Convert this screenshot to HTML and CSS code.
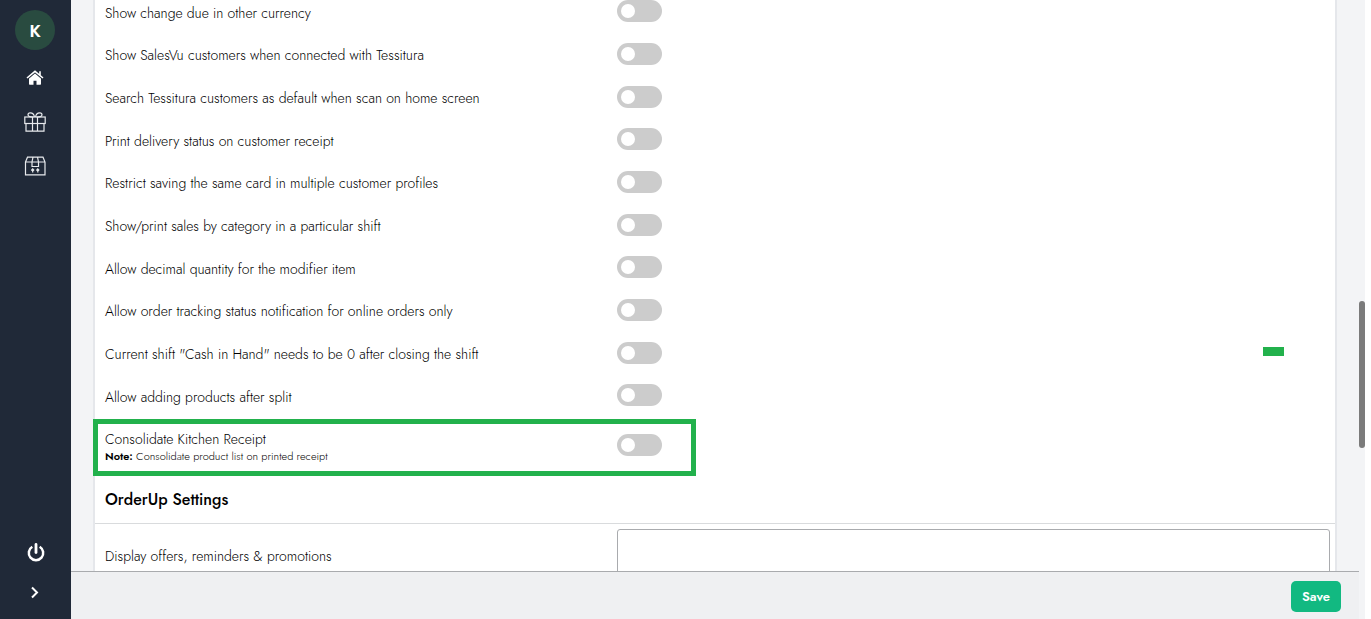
FILE: index.html
```html
<!DOCTYPE html>
<html lang="en">
<head>
<meta charset="utf-8">
<meta name="viewport" content="width=device-width, initial-scale=1">
<title>Settings</title>
<link rel="stylesheet" href="styles.css">
</head>
<body>
<div class="app">
  <nav class="sidebar" aria-label="Main">
    <div class="nav-group">
      <button class="avatar" type="button">K</button>
      <a class="nav-link" href="#" aria-label="Home">
        <svg width="18" height="18" viewBox="0 0 18 18" fill="#fff"><path d="M9 4.300 3 9.300V15c0 .4.3.7.7.7h3.800v-4h3v4h3.800c.4 0 .7-.3.7-.7V9.300z"/><path d="M1 9 9 2.300 17 9M14 6V2.300" fill="none" stroke="#fff" stroke-width="1.600"/><path d="M2.300 9.800 9 4.200l6.700 5.600" fill="none" stroke="#202938" stroke-width=".6"/></svg>
      </a>
      <a class="nav-link" href="#" aria-label="Gifts">
        <svg width="22" height="20" viewBox="0 0 22 20" fill="none" stroke="#e8eaed" stroke-width="1.200"><rect x=".8" y="5" width="20.400" height="6.500"/><path d="M2 11.500v7.700h18v-7.700M8.500 5v14.200M13.500 5v14.200M9.500 5C5.500 5 4 4 4 2.700 4 1.500 5 .8 6.200.8 8.500.8 10.200 2.500 10.400 5M12.500 5c4 0 5.500-1 5.500-2.300 0-1.200-1-1.900-2.200-1.900-2.300 0-4 1.700-4.200 4.200"/></svg>
      </a>
      <a class="nav-link" href="#" aria-label="Packages">
        <svg width="22" height="20" viewBox="0 0 22 20" fill="none" stroke="#e8eaed" stroke-width="1.200"><path d="M1.500 6 3.500 1.200h15.500L21 6v12.800H1.500zM1.500 6h6.500M14.500 6H21M9 1.200 8 6v4.500h6.500V6l-1-4.800M8 6h6.500"/><path d="M8.700 16.500v-3M13.800 16.500v-3M7.300 14.500l1.400-1.500 1.400 1.500M12.400 14.500l1.400-1.500 1.400 1.500"/></svg>
      </a>
    </div>
    <div class="nav-group nav-bottom">
      <button class="nav-link" type="button" aria-label="Log out">
        <svg width="20" height="20" viewBox="0 0 20 20" fill="none" stroke="#fff" stroke-width="2.500"><path d="M7.300 3.800a7.200 7.200 0 1 0 7.400 0"/><path d="M11 1.500v8" stroke-width="2.800" stroke-linecap="round"/></svg>
      </button>
      <button class="nav-link" type="button" aria-label="Expand menu">
        <svg width="12" height="14" viewBox="0 0 12 14" fill="none" stroke="#fff" stroke-width="2"><path d="m3 1.500 5 5-5 5"/></svg>
      </button>
    </div>
  </nav>

  <main class="main">
    <div class="viewport">
      <form class="card" id="settings">
        <div class="row"><label for="s1">Show change due in other currency</label><input class="toggle" type="checkbox" id="s1"></div>
        <div class="row"><label for="s2">Show SalesVu customers when connected with Tessitura</label><input class="toggle" type="checkbox" id="s2"></div>
        <div class="row"><label for="s3">Search Tessitura customers as default when scan on home screen</label><input class="toggle" type="checkbox" id="s3"></div>
        <div class="row"><label for="s4">Print delivery status on customer receipt</label><input class="toggle" type="checkbox" id="s4"></div>
        <div class="row"><label for="s5">Restrict saving the same card in multiple customer profiles</label><input class="toggle" type="checkbox" id="s5"></div>
        <div class="row"><label for="s6">Show/print sales by category in a particular shift</label><input class="toggle" type="checkbox" id="s6"></div>
        <div class="row"><label for="s7">Allow decimal quantity for the modifier item</label><input class="toggle" type="checkbox" id="s7"></div>
        <div class="row"><label for="s8">Allow order tracking status notification for online orders only</label><input class="toggle" type="checkbox" id="s8"></div>
        <div class="row"><label for="s9">Current shift "Cash in Hand" needs to be 0 after closing the shift</label><input class="toggle" type="checkbox" id="s9"><span class="marker"></span></div>
        <div class="row"><label for="s10">Allow adding products after split</label><input class="toggle" type="checkbox" id="s10"></div>
        <div class="row row-note">
          <div class="label-stack">
            <label for="s11">Consolidate Kitchen Receipt</label>
            <p class="note"><b>Note:</b> Consolidate product list on printed receipt</p>
          </div>
          <input class="toggle" type="checkbox" id="s11">
          <span class="highlight"></span>
        </div>
        <h2 class="section-title">OrderUp Settings</h2>
        <div class="row row-field"><label for="promo">Display offers, reminders &amp; promotions</label><textarea class="field" id="promo"></textarea></div>
      </form>
    </div>
    <footer class="footer"><button class="save" type="submit" form="settings">Save</button></footer>
  </main>
  <div class="scrollbar"><div class="thumb"></div></div>
</div>
</body>
</html>
```

FILE: styles.css
```css
* { box-sizing: border-box; }

body {
  margin: 0;
  background: #fff;
  color: #000;
  font: 300 14px/18px Jost, Lato, sans-serif;
}

button {
  border: 0;
  padding: 0;
  background: none;
  font: inherit;
  cursor: pointer;
}

.app {
  display: grid;
  grid-template-columns: 71px minmax(0, 1fr) 6px;
  height: 100vh;
  padding-right: 6px;
}

.sidebar {
  display: flex;
  flex-direction: column;
  justify-content: space-between;
  padding: 10px 1px 6px 0;
  background: #202938;
}

.nav-group {
  display: flex;
  flex-direction: column;
  align-items: center;
}

.avatar {
  width: 40px;
  height: 40px;
  margin-bottom: 6px;
  padding-top: 2px;
  border-radius: 50%;
  background: #294b40;
  color: #fff;
  font-size: 17px;
  font-weight: 600;
}

.nav-link {
  display: flex;
  align-items: center;
  justify-content: center;
  width: 40px;
  height: 44px;
}

.nav-bottom .nav-link { height: 40px; }

.main {
  display: flex;
  flex-direction: column;
  min-width: 0;
  min-height: 0;
  background: #f3f4f6;
}

.viewport {
  flex: 1;
  min-height: 0;
  overflow: hidden;
  padding: 0 22px;
}

/* The list is scrolled part of the way through its first row. */
.card {
  margin: -10px 0 0;
  border: solid #e5e7eb;
  border-width: 0 2px;
  background: #fff;
}

.row {
  position: relative;
  display: grid;
  grid-template-columns: 5fr 7fr;
  column-gap: 2px;
  align-items: center;
  min-height: 43px;
  padding: 0 5px 0 10px;
}

.row:nth-child(3n + 1) { min-height: 42px; }

.row > label { padding-top: 3px; }

.row.row-note { min-height: 58px; }

.label-stack { padding-top: 3px; }

.note {
  margin: 0;
  font-size: 11px;
  line-height: 16px;
}

.note b { font-weight: 600; }

.toggle {
  appearance: none;
  display: flex;
  align-items: center;
  width: 45px;
  height: 22px;
  margin: 0;
  padding-left: 4px;
  border-radius: 11px;
  background: #ccc;
  cursor: pointer;
}

.toggle::before {
  content: "";
  width: 14px;
  height: 14px;
  border-radius: 50%;
  background: #fff;
}

.toggle:checked {
  justify-content: flex-end;
  padding: 0 4px 0 0;
  background: #10b981;
}

.highlight {
  position: absolute;
  top: 3px;
  bottom: -2px;
  left: -2px;
  width: 603px;
  border: 5px solid #22b14c;
  pointer-events: none;
}

.marker {
  position: absolute;
  top: 16px;
  right: 51px;
  width: 21px;
  height: 9px;
  background: #22b14c;
}

.section-title {
  margin: 0;
  padding: 15px 10px 12px;
  border-bottom: 1px solid #d9dbdd;
  font-size: 16px;
  font-weight: 500;
  line-height: 22px;
}

.row.row-field {
  align-items: start;
  padding-top: 5px;
}

.row-field > label { padding-top: 18px; }

.field {
  display: block;
  width: 100%;
  height: 60px;
  padding: 8px;
  border: 1px solid #a9abae;
  border-radius: 3px;
  background: #fff;
  font: inherit;
  resize: none;
}

.footer {
  display: flex;
  justify-content: flex-end;
  padding: 9px 18px 7px;
  border-top: 1px solid #a9abae;
  background: #eff0f2;
}

.save {
  width: 50px;
  height: 31px;
  border-radius: 5px;
  background: #12b981;
  color: #fff;
  font-size: 13px;
  font-weight: 600;
}

.scrollbar {
  padding-top: 301px;
  background: #f3f4f6;
}

.thumb {
  height: 147px;
  border-radius: 3px;
  background: #7b7b7b;
}
```
